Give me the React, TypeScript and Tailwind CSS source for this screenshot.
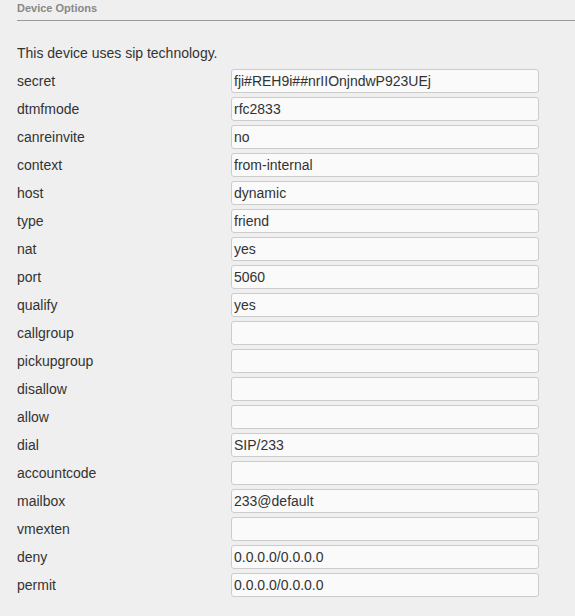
import React from 'react';

const fields: [string, string][] = [
  ['secret', 'fji#REH9i##nrIIOnjndwP923UEj'],
  ['dtmfmode', 'rfc2833'],
  ['canreinvite', 'no'],
  ['context', 'from-internal'],
  ['host', 'dynamic'],
  ['type', 'friend'],
  ['nat', 'yes'],
  ['port', '5060'],
  ['qualify', 'yes'],
  ['callgroup', ''],
  ['pickupgroup', ''],
  ['disallow', ''],
  ['allow', ''],
  ['dial', 'SIP/233'],
  ['accountcode', ''],
  ['mailbox', '233@default'],
  ['vmexten', ''],
  ['deny', '0.0.0.0/0.0.0.0'],
  ['permit', '0.0.0.0/0.0.0.0'],
];

export default function App() {
  return (
    <div className="min-h-screen w-full bg-[#efefef] pl-[17px] text-[#333] font-['Liberation_Sans',Arial,sans-serif]">
      <div className="h-[21px] border-b border-[#999] text-[11px] font-bold leading-[16px] text-[#888]">
        Device Options
      </div>
      <div className="mt-[18px] h-[28px] text-[14px] leading-[28px]">This device uses sip technology.</div>
      <div className="flex flex-col">
        {fields.map(([name, value]) => (
          <div key={name} className="flex h-[28px] items-center">
            <label className="w-[214px] text-[14px]">{name}</label>
            <input
              type="text"
              defaultValue={value}
              className="h-[24px] w-[308px] rounded-[3px] border border-[#ccc] bg-[#fafafa] pl-[2px] text-[14px] text-[#333] outline-none"
            />
          </div>
        ))}
      </div>
    </div>
  );
}
